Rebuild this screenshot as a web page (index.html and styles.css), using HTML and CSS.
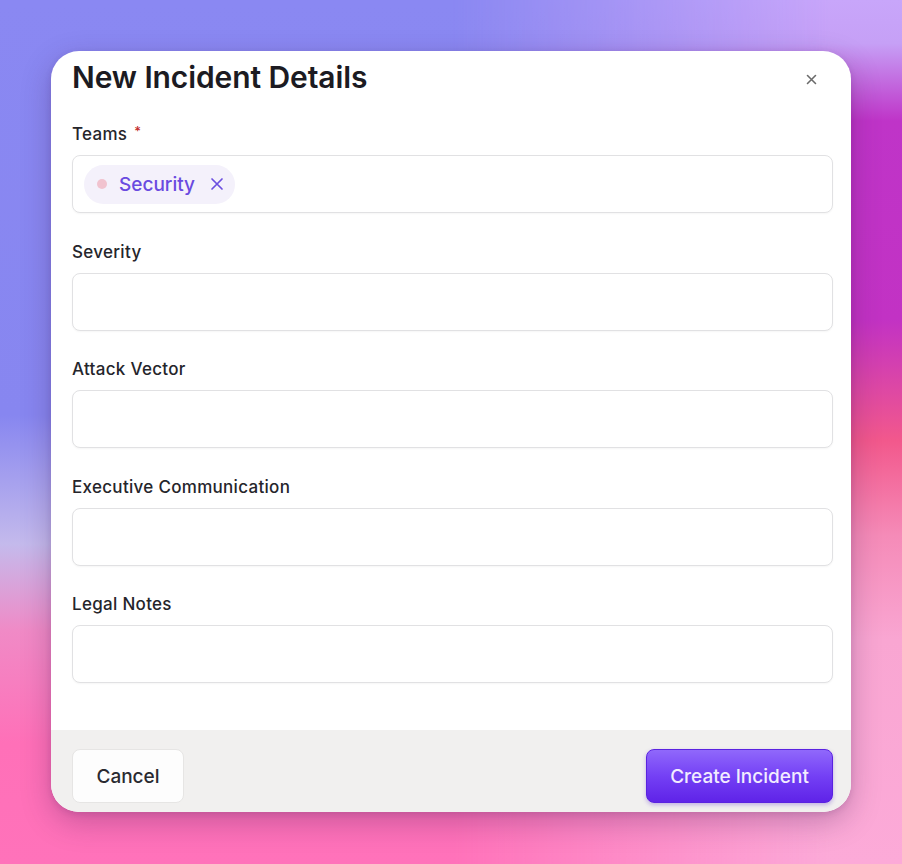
FILE: index.html
```html
<!DOCTYPE html>
<html>
<head>
<meta charset="utf-8">
<link rel="stylesheet" href="styles.css">
</head>
<body>
<div class="stage">
  <div class="modal">
    <div class="modal-head">
      <h1 class="title">New Incident Details</h1>
      <button class="close" aria-label="Close">
        <svg width="11" height="11" viewBox="0 0 11 11"><path d="M1.5 1.5L9.5 9.5M9.5 1.5L1.5 9.5" stroke="#6b6b6b" stroke-width="1.6" stroke-linecap="round"/></svg>
      </button>
    </div>
    <div class="modal-body">
      <div class="field">
        <label class="label">Teams <span class="req">*</span></label>
        <div class="input tags">
          <span class="tag">
            <span class="dot"></span>
            <span class="tag-text">Security</span>
            <svg class="tag-x" width="14" height="14" viewBox="0 0 14 14"><path d="M2 2L12 12M12 2L2 12" stroke="#6b4fe0" stroke-width="1.7" stroke-linecap="round"/></svg>
          </span>
        </div>
      </div>
      <div class="field">
        <label class="label">Severity</label>
        <div class="input"></div>
      </div>
      <div class="field">
        <label class="label">Attack Vector</label>
        <div class="input"></div>
      </div>
      <div class="field">
        <label class="label">Executive Communication</label>
        <div class="input"></div>
      </div>
      <div class="field">
        <label class="label">Legal Notes</label>
        <div class="input"></div>
      </div>
    </div>
    <div class="modal-foot">
      <button class="btn btn-cancel">Cancel</button>
      <button class="btn btn-primary">Create Incident</button>
    </div>
  </div>
</div>
</body>
</html>
```
FILE: styles.css
```css
* { box-sizing: border-box; }
html, body { margin: 0; padding: 0; }
body {
  position: relative;
  width: 902px;
  height: 864px;
  overflow: hidden;
  font-family: Inter, "Noto Sans", sans-serif;
  background: linear-gradient(180deg, #8a88f2 0%, #8786f0 48%, #c4baec 63%, #f08ac6 73%, #ff70b8 86%, #ff72ba 100%);
}
body::before {
  content: "";
  position: absolute;
  inset: 0;
  background: linear-gradient(180deg, #c8a6fa 0%, #c6a0f6 5%, #bf34c8 14%, #c232c4 37%, #f2588c 51%, #f58bb8 62%, #f9a6d2 74%, #fcaad8 100%);
  -webkit-mask-image: linear-gradient(90deg, transparent 50%, #000 92%);
  mask-image: linear-gradient(90deg, transparent 50%, #000 92%);
}
.stage {
  position: relative;
  width: 902px;
  height: 864px;
  padding: 51px 51px 0 51px;
}
.modal {
  width: 800px;
  height: 761px;
  background: #fff;
  border-radius: 28px;
  overflow: hidden;
  display: flex;
  flex-direction: column;
  box-shadow: 0 10px 30px rgba(60, 20, 80, 0.28), 0 2px 6px rgba(60, 20, 80, 0.12);
}
.modal-head {
  display: flex;
  justify-content: space-between;
  align-items: flex-start;
  padding: 8px 33px 0 21px;
}
.title {
  margin: 0;
  font-size: 30px;
  line-height: 36px;
  font-weight: 600;
  color: #1c1b22;
  letter-spacing: -0.1px;
}
.close {
  border: 0;
  background: transparent;
  padding: 0;
  margin-top: 13px;
  width: 14px;
  height: 14px;
  display: flex;
  align-items: center;
  justify-content: center;
  cursor: pointer;
}
.modal-body {
  flex: 1;
  padding: 24px 18px 0 21px;
  display: flex;
  flex-direction: column;
  gap: 26.5px;
}
.field {
  display: flex;
  flex-direction: column;
  gap: 9px;
}
.label {
  font-size: 17px;
  line-height: 24px;
  font-weight: 500;
  color: #25252b;
  letter-spacing: 0.3px;
}
.req {
  color: #c22a2a;
  font-size: 13px;
  vertical-align: 4px;
  margin-left: 2px;
}
.input {
  height: 58px;
  border: 1px solid #e1e1e3;
  border-radius: 8px;
  background: #fff;
  box-shadow: 0 1px 2px rgba(0,0,0,0.04);
}
.tags {
  display: flex;
  align-items: center;
  padding: 0 11px;
}
.tag {
  display: inline-flex;
  align-items: center;
  height: 39px;
  padding: 0 11px 0 13px;
  border-radius: 20px;
  background: #f4f1fb;
}
.dot {
  width: 10px;
  height: 10px;
  border-radius: 50%;
  background: #f1c3cf;
  margin-right: 12px;
}
.tag-text {
  font-size: 19px;
  font-weight: 500;
  color: #6a4ae0;
  margin-right: 15px;
}
.tag-x { display: block; }
.modal-foot {
  height: 82px;
  background: #f1f0ef;
  display: flex;
  justify-content: space-between;
  align-items: flex-start;
  padding: 19px 18px 0 21px;
}
.btn {
  height: 54px;
  border-radius: 8px;
  font-family: Inter, "Noto Sans", sans-serif;
  font-size: 19px;
  font-weight: 500;
  cursor: pointer;
}
.btn-cancel {
  width: 112px;
  background: #fdfdfd;
  border: 1px solid #e6e5e4;
  color: #2a2a30;
}
.btn-primary {
  width: 187px;
  border: 1px solid #5a22e0;
  color: #f2ecff;
  background: linear-gradient(180deg, #9068fb 0%, #7440f5 50%, #5f23e8 100%);
  box-shadow: 0 2px 4px rgba(80, 30, 200, 0.3);
}
```
